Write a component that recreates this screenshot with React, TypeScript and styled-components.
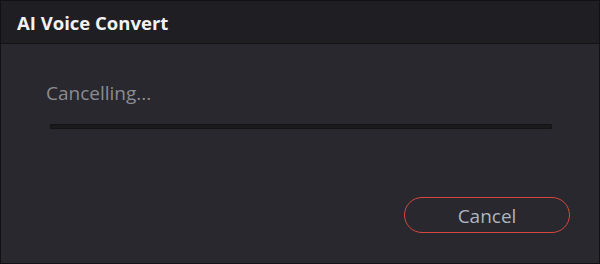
import styled, { createGlobalStyle } from 'styled-components';

const GlobalStyle = createGlobalStyle`
  html, body {
    margin: 0;
    padding: 0;
    background: #28282e;
  }
  * {
    box-sizing: border-box;
  }
`;

// --- Styled Components ---
const Dialog = styled.div`
  width: 600px;
  height: 264px;
  display: flex;
  flex-direction: column;
  background-color: #28282e;
  border: 1px solid #121214;
  font-family: 'Open Sans', 'Noto Sans', sans-serif;
`;

const TitleBar = styled.div`
  height: 43px;
  flex-shrink: 0;
  display: flex;
  align-items: center;
  padding: 0 16px;
  background-color: #1f1f23;
  border-bottom: 1px solid #141416;
`;

const Title = styled.h1`
  margin: 0;
  font-size: 18.5px;
  font-weight: 700;
  color: #f2f2f2;
`;

const Body = styled.div`
  flex: 1;
  display: flex;
  flex-direction: column;
  padding: 36px 47px 0 45px;
`;

const Status = styled.div`
  font-size: 19px;
  color: #8b8c92;
  line-height: 26px;
`;

const ProgressTrack = styled.div`
  margin: 18px 0 0 4px;
  height: 5px;
  background-color: #1a1a1c;
  border: 1px solid #141415;
  border-radius: 1px;
`;

const Footer = styled.div`
  margin-top: auto;
  display: flex;
  justify-content: flex-end;
  padding: 0 29px 30px 0;
`;

const CancelButton = styled.button`
  width: 166px;
  height: 36px;
  padding: 2px 0 0;
  border: 1.5px solid #d8483f;
  border-radius: 18px;
  background: transparent;
  color: #adb6c0;
  font-family: 'Open Sans', 'Noto Sans', sans-serif;
  font-size: 19px;
  line-height: 1;
  cursor: pointer;
`;

export default function App() {
  return (
    <>
      <GlobalStyle />
      <Dialog>
        <TitleBar>
          <Title>AI Voice Convert</Title>
        </TitleBar>
        <Body>
          <Status>Cancelling...</Status>
          <ProgressTrack />
        </Body>
        <Footer>
          <CancelButton>Cancel</CancelButton>
        </Footer>
      </Dialog>
    </>
  );
}
